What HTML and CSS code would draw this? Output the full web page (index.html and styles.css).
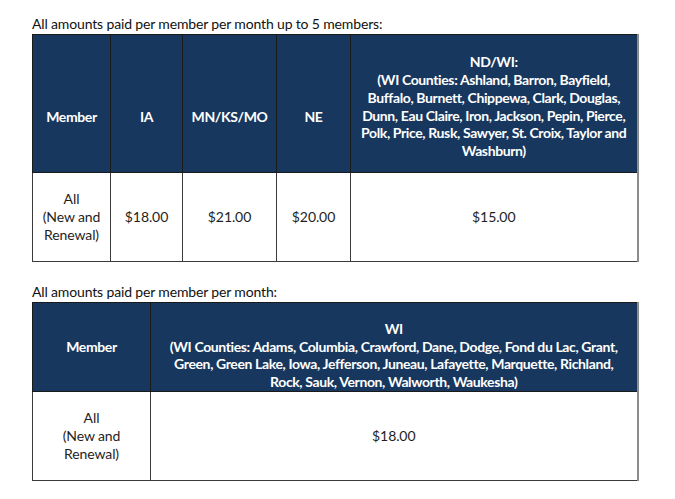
FILE: index.html
```html
<!DOCTYPE html>
<html>
<head>
<meta charset="utf-8">
<link rel="stylesheet" href="styles.css">
</head>
<body>
<div class="page">
  <p class="caption cap1">All amounts paid per member per month up to 5 members:</p>
  <table class="rates t1">
    <colgroup>
      <col class="c1"><col class="c2"><col class="c3"><col class="c4"><col class="c5">
    </colgroup>
    <thead>
      <tr class="head1">
        <th class="lowmid">Member</th>
        <th class="lowmid">IA</th>
        <th class="lowmid">MN/KS/MO</th>
        <th class="lowmid">NE</th>
        <th class="long">ND/WI:<br>(WI Counties: Ashland, Barron, Bayfield,<br>Buffalo, Burnett, Chippewa, Clark, Douglas,<br>Dunn, Eau Claire, Iron, Jackson, Pepin, Pierce,<br>Polk, Price, Rusk, Sawyer, St. Croix, Taylor and<br>Washburn)</th>
      </tr>
    </thead>
    <tbody>
      <tr class="body1">
        <td>All<br>(New and<br>Renewal)</td>
        <td>$18.00</td>
        <td>$21.00</td>
        <td>$20.00</td>
        <td>$15.00</td>
      </tr>
    </tbody>
  </table>

  <p class="caption cap2">All amounts paid per member per month:</p>
  <table class="rates t2">
    <colgroup>
      <col class="d1"><col class="d2">
    </colgroup>
    <thead>
      <tr class="head2">
        <th>Member</th>
        <th class="bottom">WI<br>(WI Counties: Adams, Columbia, Crawford, Dane, Dodge, Fond du Lac, Grant,<br>Green, Green Lake, Iowa, Jefferson, Juneau, Lafayette, Marquette, Richland,<br>Rock, Sauk, Vernon, Walworth, Waukesha)</th>
      </tr>
    </thead>
    <tbody>
      <tr class="body2">
        <td>All<br>(New and<br>Renewal)</td>
        <td>$18.00</td>
      </tr>
    </tbody>
  </table>
</div>
</body>
</html>
```

FILE: styles.css
```css
html, body {
  margin: 0;
  padding: 0;
  background: #ffffff;
}

body {
  font-family: Lato, "Open Sans", sans-serif;
  font-size: 14px;
  color: #1e1e1e;
}

.page {
  padding: 15px 0 0 32px;
}

.caption {
  margin: 0;
  line-height: 18px;
  font-size: 14px;
  letter-spacing: -0.15px;
  color: #111;
}

.cap2 {
  margin-top: 21px;
}

.rates {
  border-collapse: collapse;
  table-layout: fixed;
  width: 606px;
  margin-top: 1px;
  border: 1px solid #4a4a4a;
  border-right: 2px solid #8c8c8c;
}

.rates th,
.rates td {
  border: 1px solid #3a3a3a;
  text-align: center;
  vertical-align: middle;
  line-height: 17.8px;
  padding: 0 4px;
  white-space: nowrap;
}

.rates th {
  background: #17375e;
  color: #ffffff;
  font-weight: bold;
  letter-spacing: -0.38px;
  border-color: #1a1a1a;
}

.rates td {
  font-size: 14px;
  letter-spacing: -0.1px;
}

.rates th:last-child,
.rates td:last-child {
  border-right: 2px solid #8c8c8c;
}

.c1 { width: 78px; }
.c2 { width: 72px; }
.c3 { width: 94px; }
.c4 { width: 74px; }
.c5 { width: 287px; }

.d1 { width: 118px; }
.d2 { width: 487px; }

.head1 { height: 138px; }
.body1 { height: 89px; }
.head2 { height: 89px; }
.body2 { height: 89px; }

.rates .lowmid {
  padding-top: 26px;
}

.rates .long {
  padding-top: 6px;
}

.rates .bottom {
  vertical-align: bottom;
  padding-bottom: 0;
}
```
